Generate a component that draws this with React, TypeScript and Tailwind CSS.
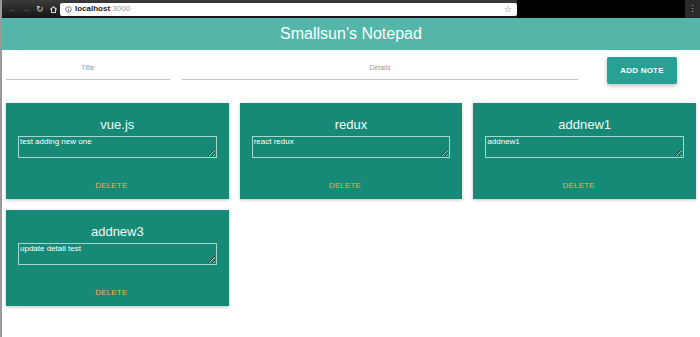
import React from 'react'

const notes = [
  { title: 'vue.js', details: 'test adding new one' },
  { title: 'redux', details: 'react redux' },
  { title: 'addnew1', details: 'addnew1' },
  { title: 'addnew3', details: 'update detail test' }
]

const BrowserBar = () => (
  <div className="flex h-[18px] items-center bg-gradient-to-b from-[#3b3b3b] to-[#151515]">
    <div className="flex w-[58px] items-center gap-[5px] pl-[6px] text-[9px] leading-none">
      <span className="text-[#5a5a5a]">←</span>
      <span className="text-[#5a5a5a]">→</span>
      <span className="text-[#d8d8d8]">↻</span>
      <svg width="9" height="9" viewBox="0 0 10 10" className="text-[#d8d8d8]">
        <path d="M1.5 5 L5 1.8 L8.5 5 M2.8 4 V8.3 H7.2 V4" fill="none" stroke="currentColor" strokeWidth="1.2" />
      </svg>
    </div>
    <div className="flex h-[13px] w-[457px] items-center rounded-[2px] bg-white px-[5px]">
      <svg width="7" height="7" viewBox="0 0 10 10" className="mr-[3px]">
        <circle cx="5" cy="5" r="4" fill="none" stroke="#555" strokeWidth="1.1" />
        <path d="M5 4.4 V7.4 M5 2.6 V3.3" stroke="#555" strokeWidth="1.1" />
      </svg>
      <span className="text-[8px] font-bold leading-none text-[#222]">localhost</span>
      <span className="text-[8px] leading-none text-[#999]">:3000</span>
      <span className="ml-auto text-[9px] leading-none text-[#666]">☆</span>
    </div>
    <div className="h-full flex-1 bg-black" />
    <div className="flex h-full w-[15px] items-center justify-center bg-[#2a2a2a] text-[9px] leading-none text-[#bbb]">⋮</div>
  </div>
)

const NoteCard = ({ title, details }: { title: string; details: string }) => (
  <div className="flex h-[96px] flex-col items-center bg-[#178a77] px-[12px] pt-[12px] shadow-[0_1px_3px_rgba(0,0,0,0.25)]">
    <h3 className="text-[13px] leading-[20px] font-normal text-[#eefaf7]">{title}</h3>
    <textarea
      readOnly
      defaultValue={details}
      className="mt-[1px] block h-[22px] w-full border border-[#a4d9ce] bg-transparent px-[1px] py-0 text-[8px] leading-[10px] text-white outline-none"
    />
    <button className="mt-[23px] mr-[12px] text-[8px] leading-[10px] tracking-[0.2px] text-[#e2b54c]">DELETE</button>
  </div>
)

export default function App() {
  return (
    <div className="h-[337px] w-[700px] overflow-hidden border-l-2 border-[#9a9a9a] bg-white font-['Liberation_Sans',Arial,sans-serif]">
      <BrowserBar />
      <header className="flex h-[32px] items-center justify-center bg-[#53b6a8]">
        <h1 className="text-[16px] leading-none font-normal text-white">Smallsun's Notepad</h1>
      </header>

      <div className="flex items-start px-[4px] pt-[7px]">
        <div className="mt-[6px] w-[164px] border-b border-[#c8c8c8] pb-[6px] text-center text-[7px] leading-[10px] text-[#9a9a9a]">
          Title
        </div>
        <div className="mt-[6px] ml-[12px] w-[396px] border-b border-[#c8c8c8] pb-[6px] text-center text-[7px] leading-[10px] text-[#9a9a9a]">
          Details
        </div>
        <button className="ml-[29px] h-[27px] w-[70px] rounded-[2px] bg-[#27a194] text-[8px] font-bold tracking-[0.2px] text-white shadow-[0_2px_4px_rgba(0,0,0,0.25)]">
          ADD NOTE
        </button>
      </div>

      <div className="grid grid-cols-3 gap-[11px] px-[4px] pt-[19px]">
        {notes.map((n) => (
          <NoteCard key={n.title} title={n.title} details={n.details} />
        ))}
      </div>
    </div>
  )
}
